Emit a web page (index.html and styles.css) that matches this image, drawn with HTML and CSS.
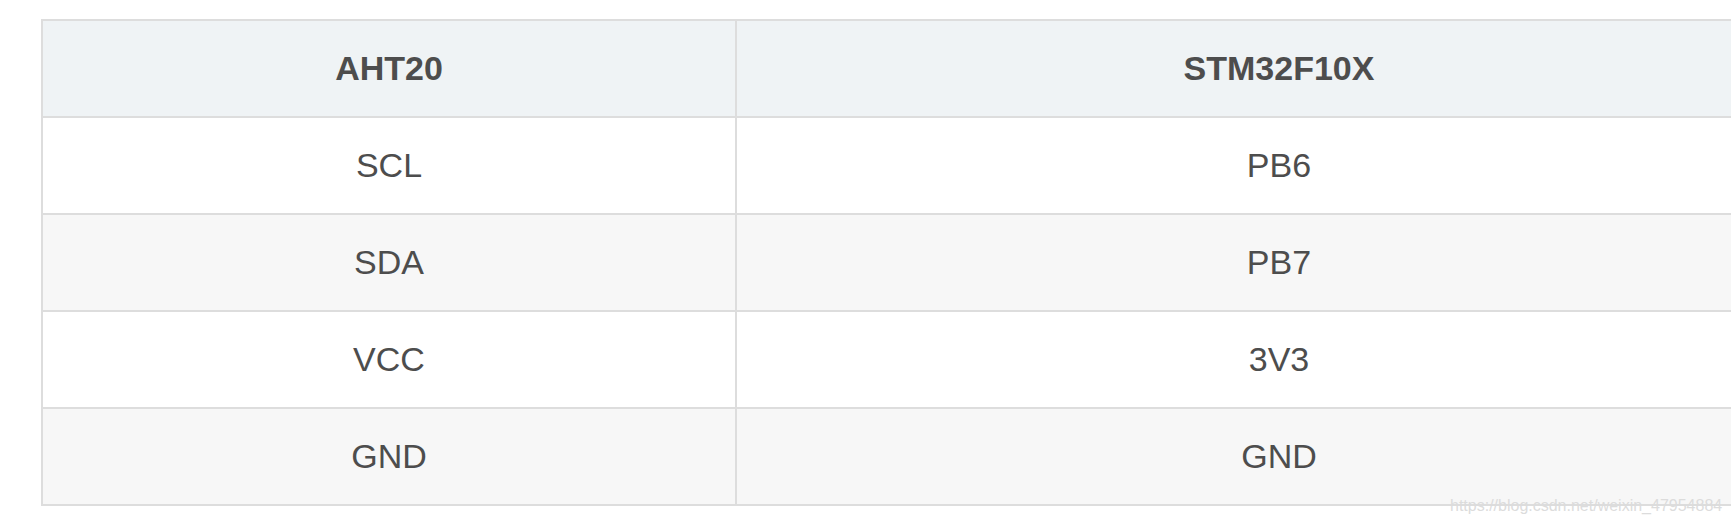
FILE: index.html
```html
<!DOCTYPE html>
<html>
<head>
<meta charset="utf-8">
<link rel="stylesheet" href="styles.css">
</head>
<body>
<div class="page">
  <table class="pins">
    <colgroup><col class="c1"><col class="c2"></colgroup>
    <thead>
      <tr><th>AHT20</th><th>STM32F10X</th></tr>
    </thead>
    <tbody>
      <tr><td>SCL</td><td>PB6</td></tr>
      <tr><td>SDA</td><td>PB7</td></tr>
      <tr><td>VCC</td><td>3V3</td></tr>
      <tr><td>GND</td><td>GND</td></tr>
    </tbody>
  </table>
  <div class="watermark">https://blog.csdn.net/weixin_47954884</div>
</div>
</body>
</html>
```

FILE: styles.css
```css
html, body {
  margin: 0;
  padding: 0;
  overflow: hidden;
  background: #ffffff;
}
.page {
  position: relative;
  width: 1731px;
  height: 525px;
  padding: 19px 0 0 41px;
  box-sizing: border-box;
  font-family: "Liberation Sans", Arial, sans-serif;
}
.pins {
  border-collapse: collapse;
  table-layout: fixed;
  width: 1780px;
  color: #4d4d4d;
  font-size: 34px;
}
.c1 { width: 694px; }
.c2 { width: 1086px; }
.pins th, .pins td {
  border: 2px solid #dddddd;
  height: 95px;
  padding: 0;
  text-align: center;
  vertical-align: middle;
  box-sizing: content-box;
}
.pins th {
  background: #eff3f5;
  font-weight: bold;
}
.pins tbody tr:nth-child(2n) {
  background: #f7f7f7;
}
.watermark {
  position: absolute;
  left: 1450px;
  top: 497px;
  font-size: 16px;
  color: #dcdcdc;
  white-space: nowrap;
}
```
